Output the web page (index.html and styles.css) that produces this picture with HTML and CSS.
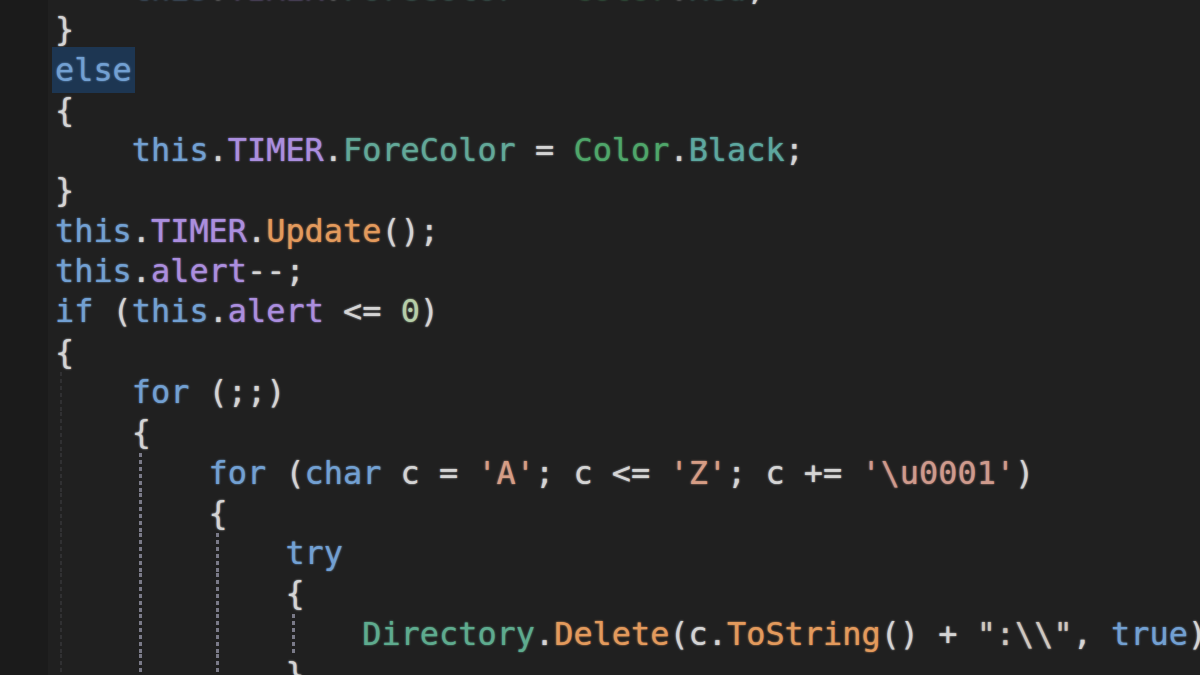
FILE: index.html
```html
<!DOCTYPE html>
<html lang="en">
<head>
<meta charset="utf-8">
<title>Code editor</title>
<link rel="stylesheet" href="styles.css">
</head>
<body>
<div class="editor">
  <div class="gutter"></div>
  <div class="code">
    <div class="line"><span class="ind"></span><span class="kw">this</span><span class="p">.</span><span class="fld">TIMER</span><span class="p">.</span><span class="prop">ForeColor</span><span class="p"> = </span><span class="typ">Color</span><span class="p">.</span><span class="prop2">Red</span><span class="p">;</span></div>
    <div class="line"><span class="p">}</span></div>
    <div class="line"><span class="kw sel">else</span></div>
    <div class="line"><span class="p">{</span></div>
    <div class="line"><span class="ind"></span><span class="kw">this</span><span class="p">.</span><span class="fld">TIMER</span><span class="p">.</span><span class="prop">ForeColor</span><span class="p"> = </span><span class="typ">Color</span><span class="p">.</span><span class="prop2">Black</span><span class="p">;</span></div>
    <div class="line"><span class="p">}</span></div>
    <div class="line"><span class="kw">this</span><span class="p">.</span><span class="fld">TIMER</span><span class="p">.</span><span class="meth">Update</span><span class="p">();</span></div>
    <div class="line"><span class="kw">this</span><span class="p">.</span><span class="fld">alert</span><span class="p">--;</span></div>
    <div class="line"><span class="kw">if</span><span class="p"> (</span><span class="kw">this</span><span class="p">.</span><span class="fld">alert</span><span class="p"> &lt;= </span><span class="num">0</span><span class="p">)</span></div>
    <div class="line"><span class="p">{</span></div>
    <div class="line"><span class="ind g0"></span><span class="kw">for</span><span class="p"> (;;)</span></div>
    <div class="line"><span class="ind g0"></span><span class="p">{</span></div>
    <div class="line"><span class="ind g0"></span><span class="ind g"></span><span class="kw">for</span><span class="p"> (</span><span class="kw">char</span><span class="p"> c = </span><span class="str">'A'</span><span class="p">; c &lt;= </span><span class="str">'Z'</span><span class="p">; c += </span><span class="str2">'\u0001'</span><span class="p">)</span></div>
    <div class="line"><span class="ind g0"></span><span class="ind g"></span><span class="p">{</span></div>
    <div class="line"><span class="ind g0"></span><span class="ind g"></span><span class="ind g"></span><span class="kw">try</span></div>
    <div class="line"><span class="ind g0"></span><span class="ind g"></span><span class="ind g"></span><span class="p">{</span></div>
    <div class="line"><span class="ind g0"></span><span class="ind g"></span><span class="ind g"></span><span class="ind g"></span><span class="typ2">Directory</span><span class="p">.</span><span class="meth">Delete</span><span class="p">(c.</span><span class="meth">ToString</span><span class="p">() + </span><span class="strw">":\\"</span><span class="p">, </span><span class="kw">true</span><span class="p">);</span></div>
    <div class="line"><span class="ind g0"></span><span class="ind g"></span><span class="ind g"></span><span class="p">}</span></div>
  </div>
</div>
</body>
</html>
```
FILE: styles.css
```css
html, body {
  margin: 0;
  padding: 0;
  background: #202020;
  overflow: hidden;
}

.editor {
  display: flex;
  width: 1200px;
  height: 675px;
  overflow: hidden;
  background: #202020;
}

.gutter {
  flex: 0 0 48px;
  background: #1b1b1b;
}

.code {
  flex: 1;
  margin-top: -31px;
  padding-left: 7px;
  font-family: "DejaVu Sans Mono", "Liberation Mono", monospace;
  font-size: 31.9px;
}

.line {
  display: flex;
  height: 40.3px;
  line-height: 40.3px;
  white-space: pre;
  text-shadow: 0 0 2px currentColor;
}

.ind {
  flex: 0 0 4ch;
  width: 4ch;
}

.ind.g {
  background-image: repeating-linear-gradient(to bottom, #7a7a88 0 4px, transparent 4px 7px);
  background-size: 3px 100%;
  background-position: 7px 0;
  background-repeat: no-repeat;
}

.ind.g0 {
  background-image: repeating-linear-gradient(to bottom, #303032 0 4px, transparent 4px 7px);
  background-size: 2px 100%;
  background-position: 5px 0;
  background-repeat: no-repeat;
}

.p { color: #d4d4d4; }
.kw { color: #72a0d2; }
.fld { color: #ab8ede; }
.prop { color: #62a898; }
.prop2 { color: #5da79f; }
.typ { color: #4fa66a; }
.typ2 { color: #5eab8e; }
.meth { color: #e39a5c; }
.num { color: #b5cea8; }
.str { color: #d69d85; }
.str2 { color: #cf9a8c; }
.strw { color: #cfc8c0; }

.sel {
  background: #1d3652;
  box-shadow: 0 0 0 3px #1d3652;
}
```
